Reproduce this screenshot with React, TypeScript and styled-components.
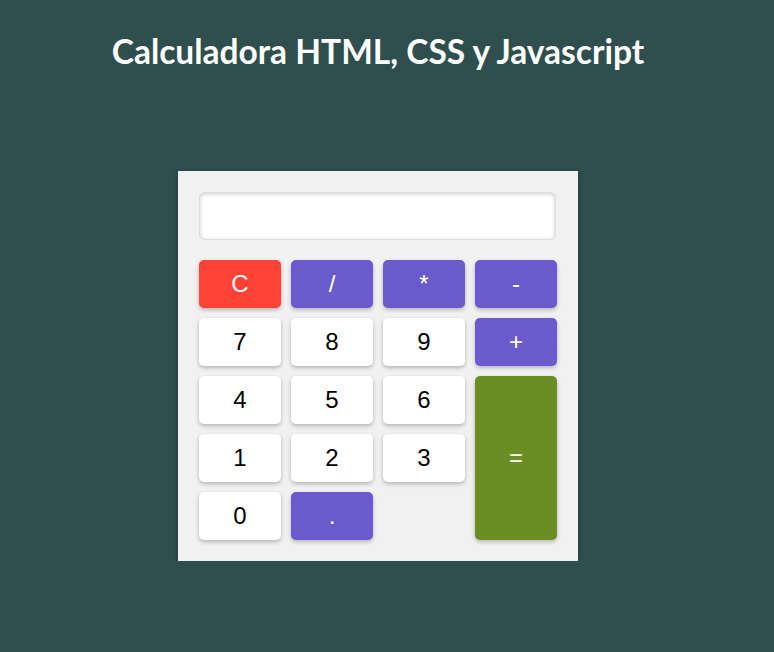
import React from 'react';
import styled, { createGlobalStyle } from 'styled-components';

const GlobalStyle = createGlobalStyle`
  html, body {
    margin: 0;
    padding: 0;
    background-color: #2f4f4f;
  }
`;

const Page = styled.div`
  padding-right: 18px;
  display: flex;
  flex-direction: column;
  align-items: center;
`;

const Title = styled.h1`
  margin: 31px 0 0 0;
  font-family: Lato, "Open Sans", sans-serif;
  font-size: 33.5px;
  font-weight: 700;
  color: #ffffff;
  line-height: 40px;
`;

const Calculator = styled.div`
  margin-top: 100px;
  width: 400px;
  box-sizing: border-box;
  padding: 21px;
  background-color: #f1f1f1;
  box-shadow: 0 2px 6px rgba(0, 0, 0, 0.35);
`;

const Display = styled.input`
  display: block;
  box-sizing: border-box;
  width: 357px;
  height: 48px;
  margin: 0 0 20px 0;
  border: 1px solid #dddddd;
  border-radius: 5px;
  background: #ffffff;
  box-shadow: inset 0 1px 4px rgba(0, 0, 0, 0.2);
  outline: none;
  font-family: "Liberation Sans", Arial, sans-serif;
  font-size: 24px;
  text-align: right;
  padding: 0 10px;
`;

const Keys = styled.div`
  display: grid;
  grid-template-columns: repeat(4, 82px);
  grid-auto-rows: 48px;
  gap: 10px;
`;

type Variant = 'clear' | 'op' | 'num' | 'equals';

const colors: Record<Variant, { bg: string; fg: string }> = {
  clear: { bg: '#ff4136', fg: '#ffffff' },
  op: { bg: '#6a5acd', fg: '#ffffff' },
  num: { bg: '#ffffff', fg: '#000000' },
  equals: { bg: '#6b8e23', fg: '#ffffff' },
};

const Key = styled.button<{ $variant: Variant; $tall?: boolean }>`
  border: none;
  border-radius: 5px;
  background-color: ${(p) => colors[p.$variant].bg};
  color: ${(p) => colors[p.$variant].fg};
  font-family: "Liberation Sans", Arial, sans-serif;
  font-size: 24px;
  box-shadow: 0 2px 4px rgba(0, 0, 0, 0.25);
  cursor: pointer;
  padding: 0;
  ${(p) => (p.$tall ? 'grid-row: span 3; grid-column: 4;' : '')}
`;

const Spacer = styled.div``;

export default function App() {
  return (
    <>
      <GlobalStyle />
      <Page>
        <Title>Calculadora HTML, CSS y Javascript</Title>
        <Calculator>
          <Display readOnly />
          <Keys>
            <Key $variant="clear">C</Key>
            <Key $variant="op">/</Key>
            <Key $variant="op">*</Key>
            <Key $variant="op">-</Key>
            <Key $variant="num">7</Key>
            <Key $variant="num">8</Key>
            <Key $variant="num">9</Key>
            <Key $variant="op">+</Key>
            <Key $variant="num">4</Key>
            <Key $variant="num">5</Key>
            <Key $variant="num">6</Key>
            <Key $variant="equals" $tall>=</Key>
            <Key $variant="num">1</Key>
            <Key $variant="num">2</Key>
            <Key $variant="num">3</Key>
            <Key $variant="num">0</Key>
            <Key $variant="op">.</Key>
            <Spacer />
          </Keys>
        </Calculator>
      </Page>
    </>
  );
}
